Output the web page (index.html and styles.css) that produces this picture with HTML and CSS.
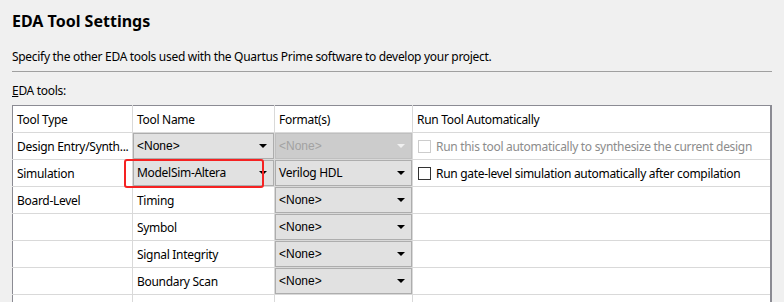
FILE: index.html
```html
<!DOCTYPE html>
<html lang="en">
<head>
    <meta charset="UTF-8">
    <title>EDA Tool Settings</title>
    <link rel="stylesheet" href="styles.css">
</head>
<body>
    <div class="page">
        <h1 class="title">EDA Tool Settings</h1>
        <div class="desc">Specify the other EDA tools used with the Quartus Prime software to develop your project.</div>
        <div class="label"><u>E</u>DA tools:</div>

        <div class="grid-wrap">
            <table class="tools">
                <colgroup>
                    <col class="c-type">
                    <col class="c-name">
                    <col class="c-format">
                    <col>
                </colgroup>
                <tr class="head">
                    <td>Tool Type</td>
                    <td>Tool Name</td>
                    <td>Format(s)</td>
                    <td>Run Tool Automatically</td>
                </tr>
                <tr>
                    <td>Design Entry/Synth...</td>
                    <td class="cb"><div class="combo small">&lt;None&gt;<span class="arrow"></span></div></td>
                    <td class="cb"><div class="combo small off">&lt;None&gt;<span class="arrow"></span></div></td>
                    <td><label class="check off"><span class="box"></span>Run this tool automatically to synthesize the current design</label></td>
                </tr>
                <tr>
                    <td>Simulation</td>
                    <td class="cb"><div class="combo">ModelSim-Altera<span class="arrow"></span></div></td>
                    <td class="cb"><div class="combo">Verilog HDL<span class="arrow"></span></div></td>
                    <td><label class="check"><span class="box"></span>Run gate-level simulation automatically after compilation</label></td>
                </tr>
                <tr>
                    <td>Board-Level</td>
                    <td>Timing</td>
                    <td class="cb"><div class="combo small">&lt;None&gt;<span class="arrow"></span></div></td>
                    <td></td>
                </tr>
                <tr>
                    <td></td>
                    <td>Symbol</td>
                    <td class="cb"><div class="combo small">&lt;None&gt;<span class="arrow"></span></div></td>
                    <td></td>
                </tr>
                <tr>
                    <td></td>
                    <td>Signal Integrity</td>
                    <td class="cb"><div class="combo small">&lt;None&gt;<span class="arrow"></span></div></td>
                    <td></td>
                </tr>
                <tr>
                    <td></td>
                    <td>Boundary Scan</td>
                    <td class="cb"><div class="combo small">&lt;None&gt;<span class="arrow"></span></div></td>
                    <td></td>
                </tr>
                <tr>
                    <td></td>
                    <td></td>
                    <td></td>
                    <td></td>
                </tr>
            </table>
            <!-- highlight drawn over the simulation tool -->
            <div class="mark"></div>
        </div>
    </div>
</body>
</html>
```

FILE: styles.css
```css
body{
    margin: 0;
    background: #f0f0f0;
    font-family: "Noto Sans", sans-serif;
    font-size: 12px;
    letter-spacing: -0.3px;
    color: #000;
    overflow: hidden;
}
.page{
    padding: 0 12px;
    width: 760px;
}
.title{
    margin: 0;
    padding-top: 11px;
    font-size: 16px;
    line-height: 20px;
    font-weight: bold;
    letter-spacing: 0;
}
.desc{
    margin-top: 17px;
    line-height: 18px;
    padding-bottom: 5px;
    border-bottom: 1px solid #a0a0a0;
}
.label{
    margin-top: 10px;
    line-height: 18px;
}
.grid-wrap{
    position: relative;
    margin-top: 5px;
}
.tools{
    width: 760px;
    border-collapse: collapse;
    background: #fff;
    border: 1px solid #8b8b93;
    border-right-width: 2px;
    table-layout: fixed;
}
.c-type{ width: 120px; }
.c-name{ width: 142px; }
.c-format{ width: 138px; }
.tools td{
    height: 26px;
    padding: 0 0 0 4px;
    border: 1px solid #d9d9d9;
    white-space: nowrap;
    overflow: hidden;
}
.tools tr:first-child td{
    border-top: none;
}
.tools td:first-child{
    border-left: none;
}
.tools td:last-child{
    border-right: none;
}
.tools td.cb{
    padding: 0;
}
.combo{
    position: relative;
    height: 24px;
    line-height: 24px;
    padding-left: 3px;
    background: #e1e1e1;
    border: 1px solid #adadad;
}
.combo.small{
    font-family: "Liberation Sans", sans-serif;
    font-size: 12px;
    letter-spacing: 0;
}
.combo.off{
    background: #cccccc;
    border-color: #bfbfbf;
    color: #a2a2a2;
}
.arrow{
    position: absolute;
    right: 6px;
    top: 10px;
    width: 0;
    height: 0;
    border-left: 4px solid transparent;
    border-right: 4px solid transparent;
    border-top: 4px solid #000;
}
.combo.off .arrow{
    border-top-color: #f0f0f0;
}
.check{
    display: flex;
    align-items: center;
    gap: 5px;
}
.box{
    width: 11px;
    height: 11px;
    border: 1px solid #333;
    background: #fff;
    margin-left: 1px;
}
.check.off{
    color: #8c8c8c;
}
.check.off .box{
    border-color: #cccccc;
}
.mark{
    position: absolute;
    left: 112px;
    top: 54px;
    width: 136px;
    height: 25px;
    border: 2px solid #f52222;
    border-radius: 3px;
}
```
